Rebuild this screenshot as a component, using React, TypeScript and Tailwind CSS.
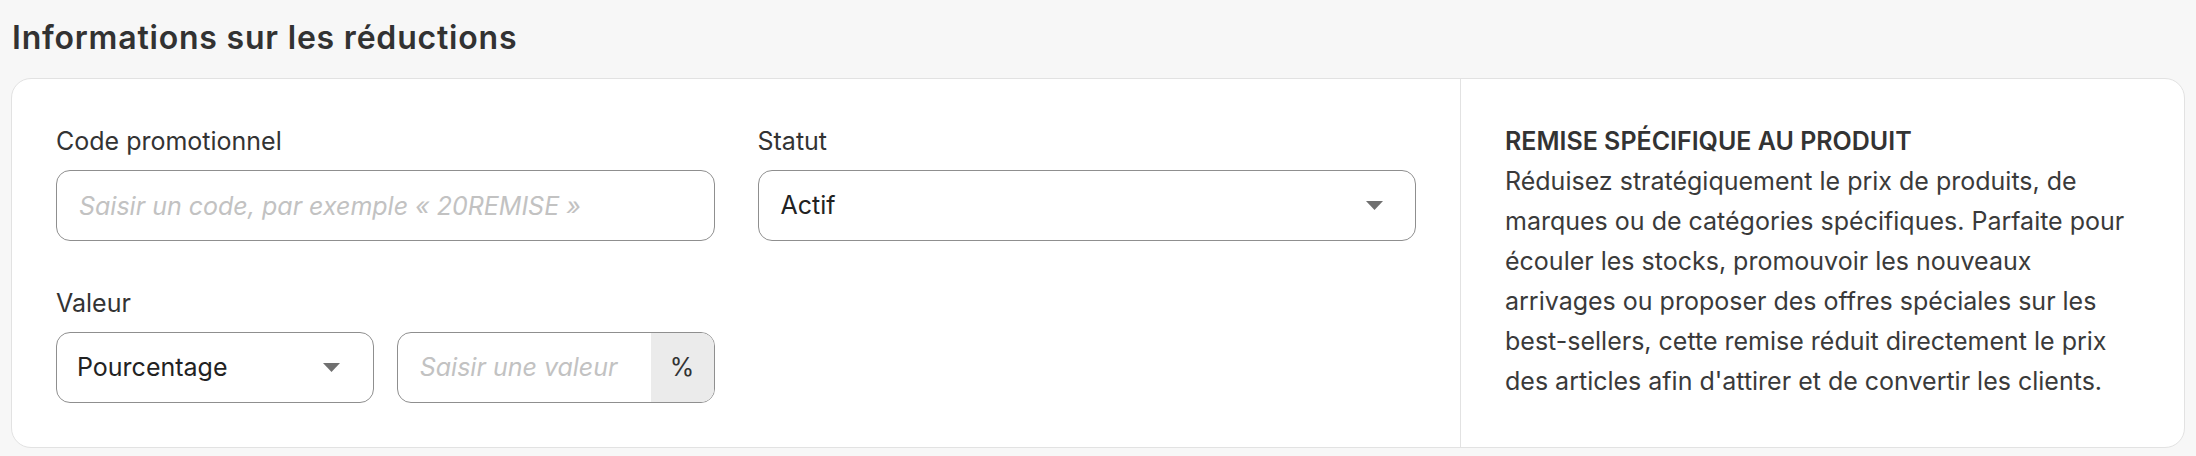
import React from "react";

function Caret() {
  return (
    <svg width="17" height="9" viewBox="0 0 17 9" className="shrink-0">
      <path d="M0 0 L17 0 L8.5 9 Z" fill="#707070" />
    </svg>
  );
}

function Label({ children }: { children: React.ReactNode }) {
  return <div className="text-[25px] leading-[36px] text-[#333333] mb-[11px]">{children}</div>;
}

export default function App() {
  return (
    <div
      className="min-h-[456px] w-full bg-[#f7f7f7] px-[11px] pt-[18px]"
      style={{ fontFamily: "Inter, 'Noto Sans', sans-serif" }}
    >
      <h1 className="text-[32px] leading-[40px] font-semibold text-[#323232] mb-[20px] pl-[1px] tracking-[0.8px]">
        Informations sur les réductions
      </h1>
      <div className="flex rounded-[20px] border border-[#e2e2e2] bg-white">
        <div className="flex-1 px-[44px] pt-[44px] pb-[44px]">
          <div className="grid grid-cols-2 gap-x-[43px] gap-y-[44px]">
            <div>
              <Label>Code promotionnel</Label>
              <input
                className="h-[71px] w-full rounded-[14px] border border-[#8f8f8f] px-[22px] text-[25px] text-[#222] outline-none placeholder:italic placeholder:text-[#c2c2c2]"
                placeholder="Saisir un code, par exemple « 20REMISE »"
              />
            </div>
            <div>
              <Label>Statut</Label>
              <div className="flex h-[71px] w-full items-center justify-between rounded-[14px] border border-[#8f8f8f] pl-[22px] pr-[32px] text-[25px] text-[#222]">
                <span>Actif</span>
                <Caret />
              </div>
            </div>
            <div>
              <Label>Valeur</Label>
              <div className="grid grid-cols-2 gap-x-[23px]">
                <div className="flex h-[71px] items-center justify-between rounded-[14px] border border-[#8f8f8f] pl-[20px] pr-[33px] text-[25px] text-[#222]">
                  <span>Pourcentage</span>
                  <Caret />
                </div>
                <div className="flex h-[71px] overflow-hidden rounded-[14px] border border-[#8f8f8f]">
                  <input
                    className="min-w-0 flex-1 px-[22px] text-[25px] text-[#222] outline-none placeholder:italic placeholder:text-[#c2c2c2]"
                    placeholder="Saisir une valeur"
                  />
                  <div className="flex w-[63px] items-center justify-center bg-[#ebebeb] text-[25px] text-[#333]">%</div>
                </div>
              </div>
            </div>
          </div>
        </div>
        <div className="w-[724px] shrink-0 border-l border-[#e2e2e2] pl-[44px] pr-[40px] pt-[42px]">
          <div className="text-[25px] leading-[40px] font-semibold text-[#333333]">REMISE SPÉCIFIQUE AU PRODUIT</div>
          <p className="text-[25px] leading-[40px] text-[#3a3a3a]">
            Réduisez stratégiquement le prix de produits, de marques ou de catégories spécifiques. Parfaite pour écouler les
            stocks, promouvoir les nouveaux arrivages ou proposer des offres spéciales sur les best-sellers, cette remise
            réduit directement le prix des articles afin d'attirer et de convertir les clients.
          </p>
        </div>
      </div>
    </div>
  );
}
